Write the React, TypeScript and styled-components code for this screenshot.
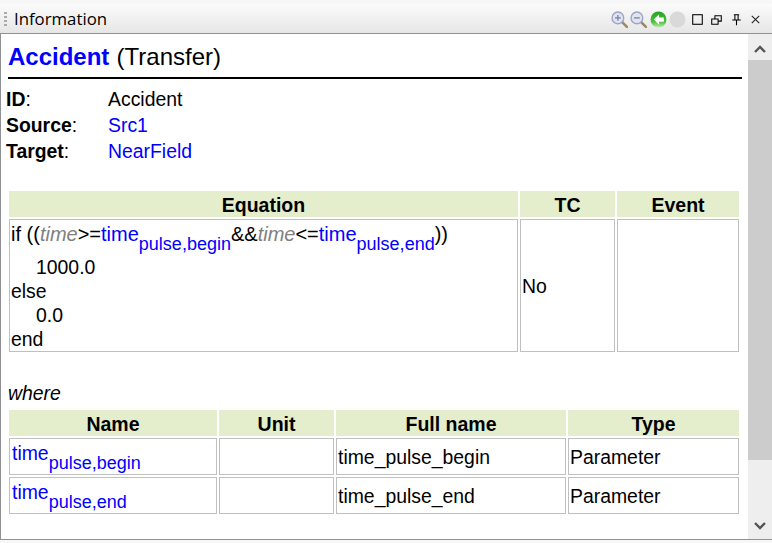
import React from "react";
import styled, { createGlobalStyle } from "styled-components";

const Global = createGlobalStyle`
  html, body {
    margin: 0;
    padding: 0;
    background: #f5f5f5;
  }
  * {
    box-sizing: border-box;
  }
`;

const Panel = styled.div`
  display: flex;
  flex-direction: column;
  width: 772px;
  height: 543px;
  overflow: hidden;
  padding: 4px 0 0 0;
  background: #f7f7f7;
  font-family: "Liberation Sans", Arial, sans-serif;
  color: #000;
`;

const TitleBar = styled.div`
  display: flex;
  align-items: center;
  flex-shrink: 0;
  height: 30px;
  padding: 0 8px 0 4px;
  background: linear-gradient(#fbfbfb, #e6e6e6);
  border-bottom: 1px solid #8f9195;
`;

const Grip = styled.div`
  width: 3px;
  height: 14px;
  margin: 1px 7px 0 0;
  background: repeating-linear-gradient(#aaa 0 2px, transparent 2px 4px);
`;

const PanelTitle = styled.span`
  flex: 1;
  padding-top: 1px;
  font-family: "Open Sans", sans-serif;
  font-size: 16.8px;
  line-height: 22px;
`;

const Tools = styled.div`
  display: flex;
  align-items: center;
  gap: 2.5px;
  padding-top: 2px;
`;

const ToolIcon = styled.svg`
  display: block;
  width: 17px;
  height: 17px;
`;

const Body = styled.div`
  display: flex;
  flex: 0 0 506px;
  background: #fff;
  border-left: 1px solid #8f9195;
  border-bottom: 1px solid #8f9399;
`;

const Content = styled.div`
  flex: 1;
  padding: 8px 6px 0 5px;
  font-size: 19.4px;
  line-height: 24px;
`;

const Heading = styled.h1`
  margin: 0 0 0 2px;
  padding: 0 0 5px 0;
  font-size: 24px;
  font-weight: 400;
  line-height: 30px;
  word-spacing: 0.5px;
  border-bottom: 2px solid #000;
`;

const Blue = styled.span`
  color: #0000ff;
`;

const HeadingLink = styled(Blue)`
  font-weight: 700;
`;

const Meta = styled.div`
  display: grid;
  grid-template-columns: 102px 1fr;
  grid-auto-rows: 26px;
  align-items: center;
  margin: 7px 0 0 0;
`;

const MetaKey = styled.div`
  white-space: nowrap;
  b {
    font-weight: 700;
  }
`;

const Table = styled.div<{ $cols: string; $top: number }>`
  display: grid;
  grid-template-columns: ${p => p.$cols};
  gap: 2px;
  margin: ${p => p.$top}px 0 0 3px;
  width: 731px;
`;

const HeadCell = styled.div`
  height: 26px;
  background: #e4edcc;
  font-size: 19.5px;
  font-weight: 700;
  line-height: 28px;
  text-align: center;
`;

const Cell = styled.div`
  display: flex;
  flex-direction: column;
  justify-content: center;
  border: 1px solid #c0c0c0;
  padding: 0 1px;
  height: 37px;
  white-space: nowrap;
`;

const TallCell = styled(Cell)`
  height: 133px;
`;

const EquationCell = styled(TallCell)`
  justify-content: flex-start;
  padding-top: 2px;
`;

const EqLine = styled.div<{ $indent?: boolean }>`
  height: 24px;
  line-height: 24px;
  padding-left: ${p => (p.$indent ? 25 : 0)}px;
`;

const EqCondition = styled(EqLine)`
  height: 36px;
  font-size: 20px;
`;

const Sub = styled.sub`
  font-size: 18px;
  line-height: 0;
  vertical-align: -9px;
`;

const TimeVar = styled.i`
  color: #808080;
`;

const NameLine = styled(Blue)`
  display: block;
  line-height: 24px;
  margin: -7px 0 0 1px;
`;

const Where = styled.div`
  margin: 29px 0 0 2px;
  font-style: italic;
  line-height: 24px;
`;

const Scrollbar = styled.div`
  display: flex;
  flex-direction: column;
  flex-shrink: 0;
  width: 24px;
  background: #eeeeee;
`;

const ScrollButton = styled.div<{ $up?: boolean }>`
  display: flex;
  align-items: center;
  justify-content: center;
  height: 26px;
  padding-top: ${p => (p.$up ? 4 : 0)}px;
  flex-shrink: 0;
`;

const ScrollThumb = styled.div`
  height: 400px;
  flex-shrink: 0;
  background: #cccccc;
`;

const ScrollGap = styled.div`
  flex: 1;
`;

const Lens = ({ minus }: { minus?: boolean }) => (
  <ToolIcon viewBox="0 0 16 16">
    <line x1="10" y1="10" x2="15" y2="15" stroke="#9a8a5c" strokeWidth="2.4" strokeLinecap="round" />
    <circle cx="6.5" cy="6.5" r="5.5" fill="#dfe3f2" stroke="#9ea4c6" strokeWidth="1.3" />
    <line x1="3.8" y1="6.5" x2="9.2" y2="6.5" stroke="#7f86aa" strokeWidth="1.3" />
    {!minus && <line x1="6.5" y1="3.8" x2="6.5" y2="9.2" stroke="#7f86aa" strokeWidth="1.3" />}
  </ToolIcon>
);

const Pulse = ({ tail }: { tail: string }) => (
  <Blue>
    time<Sub>pulse,{tail}</Sub>
  </Blue>
);

export default function App() {
  return (
    <Panel>
      <Global />
      <TitleBar>
        <Grip />
        <PanelTitle>Information</PanelTitle>
        <Tools>
          <Lens />
          <Lens minus />
          <ToolIcon viewBox="0 0 16 16">
            <defs>
              <linearGradient id="go" x1="0" y1="0" x2="0" y2="1">
                <stop offset="0" stopColor="#1fa51f" />
                <stop offset="0.65" stopColor="#4cc23c" />
                <stop offset="1" stopColor="#c4e8b8" />
              </linearGradient>
            </defs>
            <circle cx="8" cy="8" r="7.5" fill="url(#go)" />
            <path d="M8.5 3 3.5 8l5 5v-3H13V6H8.5z" fill="#fff" />
          </ToolIcon>
          <ToolIcon viewBox="0 0 16 16">
            <circle cx="8" cy="8" r="7.5" fill="#d9d9d9" />
          </ToolIcon>
          <ToolIcon viewBox="0 0 16 16">
            <rect x="3.5" y="3.5" width="9" height="9" fill="none" stroke="#000" />
          </ToolIcon>
          <ToolIcon viewBox="0 0 16 16">
            <path d="M3.5 7.5h6v5h-6zM6.5 7V4.5h6v5H10" fill="none" stroke="#000" />
          </ToolIcon>
          <ToolIcon viewBox="0 0 16 16">
            <path d="M5.5 3.5h5M6.5 3.5v5M9.5 3.5v5M4 8.5h8M8 8.5v5" fill="none" stroke="#000" />
          </ToolIcon>
          <ToolIcon viewBox="0 0 16 16">
            <path d="M4.5 4.5l7 7M11.5 4.5l-7 7" fill="none" stroke="#222" />
          </ToolIcon>
        </Tools>
      </TitleBar>
      <Body>
        <Content>
          <Heading>
            <HeadingLink>Accident</HeadingLink> (Transfer)
          </Heading>
          <Meta>
            <MetaKey><b>ID</b>:</MetaKey>
            <div>Accident</div>
            <MetaKey><b>Source</b>:</MetaKey>
            <Blue>Src1</Blue>
            <MetaKey><b>Target</b>:</MetaKey>
            <Blue>NearField</Blue>
          </Meta>
          <Table $cols="509px 95px 122px" $top={27}>
            <HeadCell>Equation</HeadCell>
            <HeadCell>TC</HeadCell>
            <HeadCell>Event</HeadCell>
            <EquationCell>
              <EqCondition>
                if ((<TimeVar>time</TimeVar>&gt;=<Pulse tail="begin" />&amp;&amp;<TimeVar>time</TimeVar>&lt;=<Pulse tail="end" />))
              </EqCondition>
              <EqLine $indent>1000.0</EqLine>
              <EqLine>else</EqLine>
              <EqLine $indent>0.0</EqLine>
              <EqLine>end</EqLine>
            </EquationCell>
            <TallCell>No</TallCell>
            <TallCell />
          </Table>
          <Where>where</Where>
          <Table $cols="208px 115px 230px 171px" $top={5}>
            <HeadCell>Name</HeadCell>
            <HeadCell>Unit</HeadCell>
            <HeadCell>Full name</HeadCell>
            <HeadCell>Type</HeadCell>
            <Cell><NameLine>time<Sub>pulse,begin</Sub></NameLine></Cell>
            <Cell />
            <Cell>time_pulse_begin</Cell>
            <Cell>Parameter</Cell>
            <Cell><NameLine>time<Sub>pulse,end</Sub></NameLine></Cell>
            <Cell />
            <Cell>time_pulse_end</Cell>
            <Cell>Parameter</Cell>
          </Table>
        </Content>
        <Scrollbar>
          <ScrollButton $up>
            <svg width="12" height="8" viewBox="0 0 12 8">
              <path d="M1 7l5-5 5 5" fill="none" stroke="#555" strokeWidth="2.4" />
            </svg>
          </ScrollButton>
          <ScrollThumb />
          <ScrollGap />
          <ScrollButton>
            <svg width="12" height="8" viewBox="0 0 12 8">
              <path d="M1 1l5 5 5-5" fill="none" stroke="#555" strokeWidth="2.4" />
            </svg>
          </ScrollButton>
        </Scrollbar>
      </Body>
    </Panel>
  );
}
